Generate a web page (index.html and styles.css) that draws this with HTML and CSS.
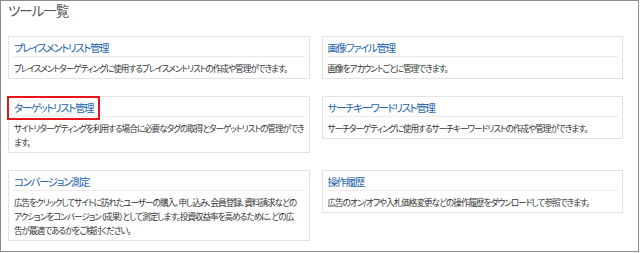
FILE: index.html
```html
<!DOCTYPE html>
<html lang="ja">
<head>
<meta charset="utf-8">
<title>ツール一覧</title>
<link rel="stylesheet" href="styles.css">
</head>
<body>
<div class="frame">
  <h1 class="page-title">ツール一覧</h1>
  <div class="tool-grid">
    <div class="card">
      <div class="card-title">プレイスメントリスト管理</div>
      <div class="card-text">プレイスメントターゲティングに使用するプレイスメントリストの作成や管理ができます。</div>
    </div>
    <div class="card">
      <div class="card-title">画像ファイル管理</div>
      <div class="card-text">画像をアカウントごとに管理できます。</div>
    </div>
    <div class="card">
      <div class="card-title">ターゲットリスト管理</div>
      <div class="card-text">サイトリターゲティングを利用する場合に必要なタグの取得とターゲットリストの管理ができます。</div>
      <div class="highlight"></div>
    </div>
    <div class="card">
      <div class="card-title">サーチキーワードリスト管理</div>
      <div class="card-text">サーチターゲティングに使用するサーチキーワードリストの作成や管理ができます。</div>
    </div>
    <div class="card">
      <div class="card-title">コンバージョン測定</div>
      <div class="card-text">広告をクリックしてサイトに訪れたユーザーの購入、申し込み、会員登録、資料請求などの<br>アクションをコンバージョン（成果）として測定します。投資収益率を高めるために、どの広<br>告が最適であるかをご検討ください。</div>
    </div>
    <div class="card">
      <div class="card-title">操作履歴</div>
      <div class="card-text">広告のオン/オフや入札価格変更などの操作履歴をダウンロードして参照できます。</div>
    </div>
  </div>
</div>
</body>
</html>
```
FILE: styles.css
```css
html, body {
  margin: 0;
  padding: 0;
  background: #fff;
}
body {
  font-family: "Noto Sans CJK JP", "Noto Sans", sans-serif;
  font-feature-settings: "palt";
  color: #333;
}
.frame {
  box-sizing: border-box;
  width: 639px;
  height: 252px;
  border: 1px solid #8c8c8c;
  padding: 0 15px 0 7px;
  overflow: hidden;
}
.page-title {
  margin: 0 0 17px;
  font-size: 13.5px;
  line-height: 18px;
  letter-spacing: -1px;
  font-weight: normal;
  color: #555;
}
.tool-grid {
  display: grid;
  grid-template-columns: 1fr 1fr;
  column-gap: 12px;
  row-gap: 17px;
  align-items: start;
}
.card {
  position: relative;
  border: 1px solid #e2e2e2;
  padding: 0 4px 0 4px;
}
.card-title {
  padding: 3px 0 0 1px;
  line-height: 16px;
  font-size: 10.5px;
  letter-spacing: -1.4px;
  color: #1d62ad;
  border-bottom: 1px solid #ececec;
}
.card-text {
  padding: 4px 0 3px 1px;
  font-size: 8.6px;
  line-height: 14px;
  letter-spacing: -1px;
  color: #333;
}
.highlight {
  position: absolute;
  left: -2px;
  top: -1px;
  width: 89px;
  height: 20px;
  border: 2px solid #e8141c;
}
```
